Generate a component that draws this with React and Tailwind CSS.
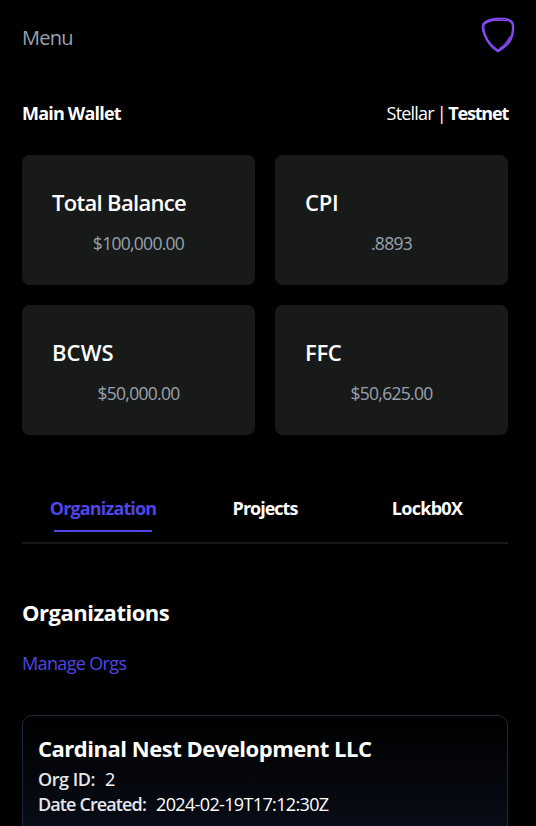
const stats = [
  { label: 'Total Balance', value: '$100,000.00', tracking: 'tracking-[-0.68px]' },
  { label: 'CPI', value: '.8893', tracking: 'tracking-[-0.2px]' },
  { label: 'BCWS', value: '$50,000.00', tracking: 'tracking-[0.1px]' },
  { label: 'FFC', value: '$50,625.00', tracking: 'tracking-[-0.3px]' },
];

function Logo() {
  return (
    <svg width="34" height="36" viewBox="0 0 34 36" fill="none" stroke="#8b4dff" strokeLinecap="round" strokeLinejoin="round">
      <path strokeWidth="1.6" d="M2 7C5 3.500 10 2 15 1.600H24C28 2.500 31 3.800 32 6.500C33 13 32 19 29 24C26 29 21 32 17 34.500C11 31 6 25 3.500 18C1.500 13 .800 9.500 2 7Z" />
      <path strokeWidth="1.1" d="M3.200 7.500C6 4.500 11 3.200 17 3.100L28 3.800L31 6.500C32 13 31 18 29 21C27 26 22 30.500 17 33.200C11 29 6.500 23.500 4.500 18C2.700 13 2.500 10 3.200 7.500Z" />
      <path strokeWidth="1" d="M1.600 9C1.500 13 3 17 4.500 20M28.500 20C26 25 23 28 19 31" />
    </svg>
  );
}

function StatCard({ label, value, tracking }) {
  return (
    <section className="h-[130px] rounded-lg bg-[#181a19] px-[30px] pt-[32px]">
      <h3 className={`text-[22px] font-semibold leading-[30px] whitespace-nowrap ${tracking}`}>{label}</h3>
      <p className="mt-[13px] text-center text-[17.5px] font-normal leading-[27px] tracking-[-0.72px] text-gray-400">{value}</p>
    </section>
  );
}

export default function App() {
  return (
    <main className="h-[826px] overflow-hidden bg-black pl-[22px] pr-[28px] font-['Segoe_UI','Open_Sans',sans-serif] text-white">
      <header className="-mr-[7px] flex h-[76px] items-start justify-between">
        <button className="mt-[24px] text-[20px] leading-[28px] text-gray-400 tracking-[-0.75px]">Menu</button>
        <div className="mt-[17px]"><Logo /></div>
      </header>
      <div className="mt-[23px] flex h-[28px] items-center justify-between text-[18px] leading-[28px]">
        <h2 className="font-bold tracking-[-0.8px]">Main Wallet</h2>
        <p className="tracking-[-0.8px]">Stellar <span className="-ml-px tracking-[-1.5px]">| </span><b className="tracking-[-1.2px]">Testnet</b></p>
      </div>
      <div className="mt-[28px] grid grid-cols-2 gap-[20px]">
        {stats.map((s) => <StatCard key={s.label} {...s} />)}
      </div>
      <nav className="mt-[60px] grid h-[49px] grid-cols-3 border-b-2 border-[#181818] text-center text-[18px] font-bold leading-[27px]">
        <div className="flex flex-col items-center text-[#4f46e5]">
          <span className="tracking-[-0.85px]">Organization</span>
          <span className="mt-[8px] h-[2px] w-[98px] bg-[#4f46e5]" />
        </div>
        <span className="tracking-[-1px]">Projects</span>
        <span className="tracking-[-0.7px]">Lockb0X</span>
      </nav>
      <h2 className="mt-[52px] text-[22px] font-bold leading-[32px] tracking-[-0.5px]">Organizations</h2>
      <a className="mt-[21px] block text-[18px] leading-[28px] text-[#4f46e5] tracking-[-0.65px]">Manage Orgs</a>
      <article className="mt-[38px] h-[210px] rounded-[10px] border border-gray-800 bg-linear-to-b/srgb from-black to-[#0f172a] px-[15px] pt-[16px]">
        <h3 className="text-[22px] font-bold leading-[32px] tracking-[-0.48px]">Cardinal Nest Development LLC</h3>
        <div className="mt-[3px] text-[18px] leading-[25px]">
          <p className="flex gap-[10px]">
            <span className="font-semibold text-gray-200 tracking-[-0.45px]">Org ID:</span>
            <span>2</span>
          </p>
          <p className="flex gap-[10px]">
            <span className="font-semibold text-gray-200 tracking-[-0.88px]">Date Created:</span>
            <span className="tracking-[-0.64px]">2024-02-19T17:12:30Z</span>
          </p>
        </div>
      </article>
    </main>
  );
}
